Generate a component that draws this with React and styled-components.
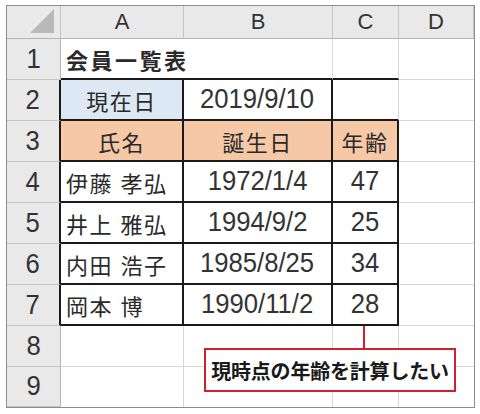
import React from "react";
import styled, { createGlobalStyle } from "styled-components";

const Global = createGlobalStyle`
  html, body { margin: 0; padding: 0; background: #fff; }
  body { font-family: "Liberation Sans", "Noto Sans CJK JP", sans-serif; }
`;

const Page = styled.div`
  padding: 5px 0 0 6px;
`;

const Sheet = styled.div`
  position: relative;
  display: grid;
  grid-template-columns: 54px 123px 149px 66px 75px;
  grid-template-rows: 33px repeat(8, 41px) 40px;
  width: 467px;
  border: 1px solid #8c8c8c;
  box-sizing: content-box;
`;

const ColHead = styled.div`
  background: #e9e9e9;
  border-right: 1px solid #c4c4c4;
  border-bottom: 1px solid #b5b5b5;
  display: flex;
  align-items: center;
  justify-content: center;
  font-size: 22px;
  color: #333;
  box-sizing: border-box;
  &:last-child { border-right: none; }
`;

const Corner = styled(ColHead)`
  align-items: flex-end;
  justify-content: flex-end;
  padding: 0 6px 5px 0;
`;

const RowHead = styled.div`
  background: #e9e9e9;
  border-right: ${(p) => (p.$dark ? "2px solid #1a1a1a" : "1px solid #b5b5b5")};
  border-bottom: 1px solid #c4c4c4;
  display: flex;
  align-items: center;
  justify-content: center;
  color: #333;
  box-sizing: border-box;
`;

const Cell = styled.div`
  grid-column: span ${(p) => p.$span || 1};
  background: ${(p) => p.$bg || "#fff"};
  border-right: ${(p) => (p.$rb ? "2px solid #1a1a1a" : p.$noR ? "none" : "1px solid #d6d6d6")};
  border-bottom: ${(p) => (p.$bb ? "2px solid #1a1a1a" : p.$noB ? "none" : "1px solid #d6d6d6")};
  display: flex;
  align-items: center;
  justify-content: ${(p) => (p.$left ? "flex-start" : "center")};
  padding-left: ${(p) => (p.$left ? "5px" : "0")};
  font-size: 22px;
  font-weight: ${(p) => (p.$bold ? 700 : 400)};
  letter-spacing: ${(p) => (p.$bold ? "2.5px" : p.$cjk ? "1.5px" : "0")};
  color: #2a2a2a;
  box-sizing: border-box;
  white-space: nowrap;
`;

const Num = styled.span`
  font-size: 27px;
  line-height: 1;
  display: inline-block;
  transform: scaleX(0.95);
  color: #333;
`;

const Connector = styled.div`
  position: absolute;
  left: 356px;
  top: 320px;
  width: 2px;
  height: 23px;
  background: #d2202c;
`;

const Callout = styled.div`
  position: absolute;
  left: 197px;
  top: 342px;
  width: 252px;
  height: 44px;
  box-sizing: border-box;
  border: 2px solid #d2202c;
  background: #fff;
  display: flex;
  align-items: center;
  justify-content: center;
  font-family: "Noto Sans CJK JP", sans-serif;
  font-weight: 700;
  font-size: 20px;
  letter-spacing: -0.2px;
  color: #1a1a1a;
`;

const Triangle = () => (
  <svg width="24" height="24" viewBox="0 0 24 24">
    <polygon points="24,0 24,24 0,24" fill="#b9b9b9" />
  </svg>
);

const rows = [
  { n: 4, name: "伊藤 孝弘", date: "1972/1/4", age: "47" },
  { n: 5, name: "井上 雅弘", date: "1994/9/2", age: "25" },
  { n: 6, name: "内田 浩子", date: "1985/8/25", age: "34" },
  { n: 7, name: "岡本 博", date: "1990/11/2", age: "28" },
];

export default function App() {
  return (
    <Page>
      <Global />
      <Sheet>
        <Corner><Triangle /></Corner>
        <ColHead>A</ColHead>
        <ColHead>B</ColHead>
        <ColHead>C</ColHead>
        <ColHead>D</ColHead>

        <RowHead><Num>1</Num></RowHead>
        <Cell $span={2} $left $bold $bb>会員一覧表</Cell>
        <Cell $bb />
        <Cell $noR />

        <RowHead $dark><Num>2</Num></RowHead>
        <Cell $bg="#dde8f5" $rb $bb $cjk>現在日</Cell>
        <Cell $rb $bb><Num>2019/9/10</Num></Cell>
        <Cell $bb />
        <Cell $noR />

        <RowHead $dark><Num>3</Num></RowHead>
        <Cell $bg="#f6c8a6" $rb $bb $cjk>氏名</Cell>
        <Cell $bg="#f6c8a6" $rb $bb $cjk>誕生日</Cell>
        <Cell $bg="#f6c8a6" $rb $bb $cjk>年齢</Cell>
        <Cell $noR />

        {rows.map((r) => (
          <React.Fragment key={r.n}>
            <RowHead $dark><Num>{r.n}</Num></RowHead>
            <Cell $rb $bb $left $cjk>{r.name}</Cell>
            <Cell $rb $bb><Num>{r.date}</Num></Cell>
            <Cell $rb $bb><Num>{r.age}</Num></Cell>
            <Cell $noR />
          </React.Fragment>
        ))}

        <RowHead><Num>8</Num></RowHead>
        <Cell />
        <Cell />
        <Cell />
        <Cell $noR />

        <RowHead><Num>9</Num></RowHead>
        <Cell $noB />
        <Cell $noB />
        <Cell $noB />
        <Cell $noR $noB />

        <Connector />
        <Callout>現時点の年齢を計算したい</Callout>
      </Sheet>
    </Page>
  );
}
